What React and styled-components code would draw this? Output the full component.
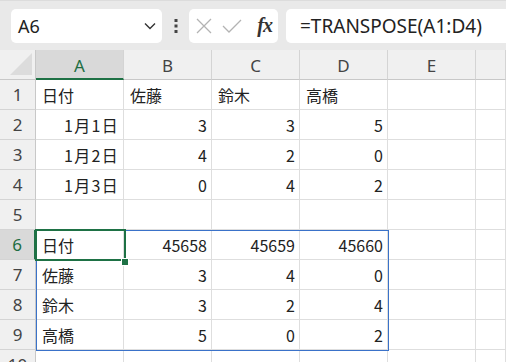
import React from "react"
import styled, { createGlobalStyle } from "styled-components"

const GlobalStyle = createGlobalStyle`
    html, body {
        margin: 0;
        padding: 0;
        background: #ffffff;
        overflow: hidden;
    }
`

const Page = styled.div`
    width: 506px;
    height: 362px;
    overflow: hidden;
    font-family: "Noto Sans CJK JP", "Noto Sans", sans-serif;
`

const Toolbar = styled.div`
    height: 50px;
    background: #e9e9e9;
    display: flex;
    align-items: center;
    padding-left: 11px;
    box-sizing: border-box;
    border-top: 1px solid #dcdcdc;
`

const NameBox = styled.div`
    width: 151px;
    height: 34px;
    background: #fff;
    border-radius: 5px;
    display: flex;
    align-items: center;
    justify-content: space-between;
    padding: 0 6px 0 7px;
    box-sizing: border-box;
    font-family: "Noto Sans", sans-serif;
    font-size: 18px;
    color: #222;
`

const Dots = styled.div`
    width: 27px;
    display: flex;
    justify-content: center;
`

const IconBox = styled.div`
    width: 89px;
    height: 34px;
    background: #fff;
    border-radius: 5px;
    display: flex;
    align-items: center;
    padding: 0 6px 0 7px;
    box-sizing: border-box;
    gap: 10px;
`

const Fx = styled.span`
    font-family: "Liberation Serif", "DejaVu Serif", serif;
    font-style: italic;
    font-weight: bold;
    font-size: 20px;
    color: #333;
    margin-left: auto;
    letter-spacing: -1px;
`

const FormulaBar = styled.div`
    flex: 1;
    height: 34px;
    margin-left: 8px;
    background: #fff;
    border-radius: 5px 0 0 5px;
    display: flex;
    align-items: center;
    padding-left: 14px;
    font-family: "Noto Sans", sans-serif;
    font-size: 19px;
    color: #222;
`

const Sheet = styled.div`
    position: relative;
    display: grid;
    grid-template-columns: 36px repeat(5, 88px) 30px;
    grid-auto-rows: 30px;
`

const Corner = styled.div`
    background: #f0f0f0;
    border-right: 1px solid #c8c8c8;
    border-bottom: 1px solid #c8c8c8;
    box-sizing: border-box;
    position: relative;
    overflow: hidden;
`

const Tri = styled.div`
    position: absolute;
    right: 3px;
    bottom: 4px;
    width: 0;
    height: 0;
    border-left: 22px solid transparent;
    border-bottom: 22px solid #dcdcdc;
`

const ColHead = styled.div`
    background: ${p => (p.$active ? "#d9d9d9" : "#f0f0f0")};
    border-right: 1px solid #d4d4d4;
    border-bottom: ${p => (p.$active ? "2px solid #1e7145" : "1px solid #c8c8c8")};
    box-sizing: border-box;
    display: flex;
    align-items: center;
    justify-content: center;
    font-family: "Noto Sans", sans-serif;
    font-size: 17px;
    color: ${p => (p.$active ? "#1e6e42" : "#444")};
    padding-top: 2px;
`

const RowHead = styled.div`
    background: ${p => (p.$active ? "#d9d9d9" : "#f0f0f0")};
    border-right: ${p => (p.$active ? "2px solid #1e7145" : "1px solid #c8c8c8")};
    border-bottom: 1px solid #d4d4d4;
    box-sizing: border-box;
    display: flex;
    align-items: center;
    justify-content: center;
    font-family: "Noto Sans", sans-serif;
    font-size: 17px;
    color: ${p => (p.$active ? "#1e6e42" : "#444")};
`

const Cell = styled.div`
    border-right: 1px solid #dedede;
    border-bottom: 1px solid #dedede;
    box-sizing: border-box;
    display: flex;
    align-items: center;
    justify-content: ${p => (p.$right ? "flex-end" : "flex-start")};
    padding: 1px 4px 0 6px;
    font-size: 16px;
    color: #222;
    white-space: nowrap;
    letter-spacing: ${p => (p.$date ? "1.3px" : "0")};
`

const RangeBox = styled.div`
    position: absolute;
    left: 36px;
    top: 180px;
    width: 353px;
    height: 121px;
    border: 1px solid #3a72c9;
    box-sizing: border-box;
    pointer-events: none;
`

const ActiveCell = styled.div`
    position: absolute;
    left: 35px;
    top: 179px;
    width: 91px;
    height: 32px;
    border: 2px solid #1e7145;
    box-sizing: border-box;
    pointer-events: none;
`

const Handle = styled.div`
    position: absolute;
    left: 121px;
    top: 208px;
    width: 6px;
    height: 6px;
    background: #1e7145;
    border: 1px solid #fff;
`

const cols = ["A", "B", "C", "D", "E", ""]

const rows = [
    [{ t: "日付" }, { t: "佐藤" }, { t: "鈴木" }, { t: "高橋" }, {}, {}],
    [{ t: "1月1日", r: 1, d: 1 }, { t: "3", r: 1 }, { t: "3", r: 1 }, { t: "5", r: 1 }, {}, {}],
    [{ t: "1月2日", r: 1, d: 1 }, { t: "4", r: 1 }, { t: "2", r: 1 }, { t: "0", r: 1 }, {}, {}],
    [{ t: "1月3日", r: 1, d: 1 }, { t: "0", r: 1 }, { t: "4", r: 1 }, { t: "2", r: 1 }, {}, {}],
    [{}, {}, {}, {}, {}, {}],
    [{ t: "日付" }, { t: "45658", r: 1 }, { t: "45659", r: 1 }, { t: "45660", r: 1 }, {}, {}],
    [{ t: "佐藤" }, { t: "3", r: 1 }, { t: "4", r: 1 }, { t: "0", r: 1 }, {}, {}],
    [{ t: "鈴木" }, { t: "3", r: 1 }, { t: "2", r: 1 }, { t: "4", r: 1 }, {}, {}],
    [{ t: "高橋" }, { t: "5", r: 1 }, { t: "0", r: 1 }, { t: "2", r: 1 }, {}, {}],
    [{}, {}, {}, {}, {}, {}],
]

export default function App() {
    return (
        <Page>
            <GlobalStyle />
            <Toolbar>
                <NameBox>
                    <span>A6</span>
                    <svg width="12" height="8" viewBox="0 0 12 8">
                        <path d="M1 1.5 L6 6.5 L11 1.5" fill="none" stroke="#333" strokeWidth="1.4" />
                    </svg>
                </NameBox>
                <Dots>
                    <svg width="4" height="14" viewBox="0 0 4 14">
                        <rect x="0.5" y="0" width="3" height="3" fill="#444" />
                        <rect x="0.5" y="5.5" width="3" height="3" fill="#444" />
                        <rect x="0.5" y="11" width="3" height="3" fill="#444" />
                    </svg>
                </Dots>
                <IconBox>
                    <svg width="16" height="16" viewBox="0 0 16 16">
                        <path d="M1 1 L15 15 M15 1 L1 15" stroke="#b3b3b3" strokeWidth="1.3" />
                    </svg>
                    <svg width="20" height="16" viewBox="0 0 20 16">
                        <path d="M1 8 L7 14 L19 2" fill="none" stroke="#b3b3b3" strokeWidth="1.3" />
                    </svg>
                    <Fx>fx</Fx>
                </IconBox>
                <FormulaBar>=TRANSPOSE(A1:D4)</FormulaBar>
            </Toolbar>
            <Sheet>
                <Corner>
                    <Tri />
                </Corner>
                {cols.map((c, i) => (
                    <ColHead key={i} $active={c === "A"}>{c}</ColHead>
                ))}
                {rows.map((row, ri) => (
                    <React.Fragment key={ri}>
                        <RowHead $active={ri === 5}>{ri + 1}</RowHead>
                        {row.map((cell, ci) => (
                            <Cell key={ci} $right={cell.r} $date={cell.d}>{cell.t}</Cell>
                        ))}
                    </React.Fragment>
                ))}
                <RangeBox />
                <ActiveCell />
                <Handle />
            </Sheet>
        </Page>
    )
}
